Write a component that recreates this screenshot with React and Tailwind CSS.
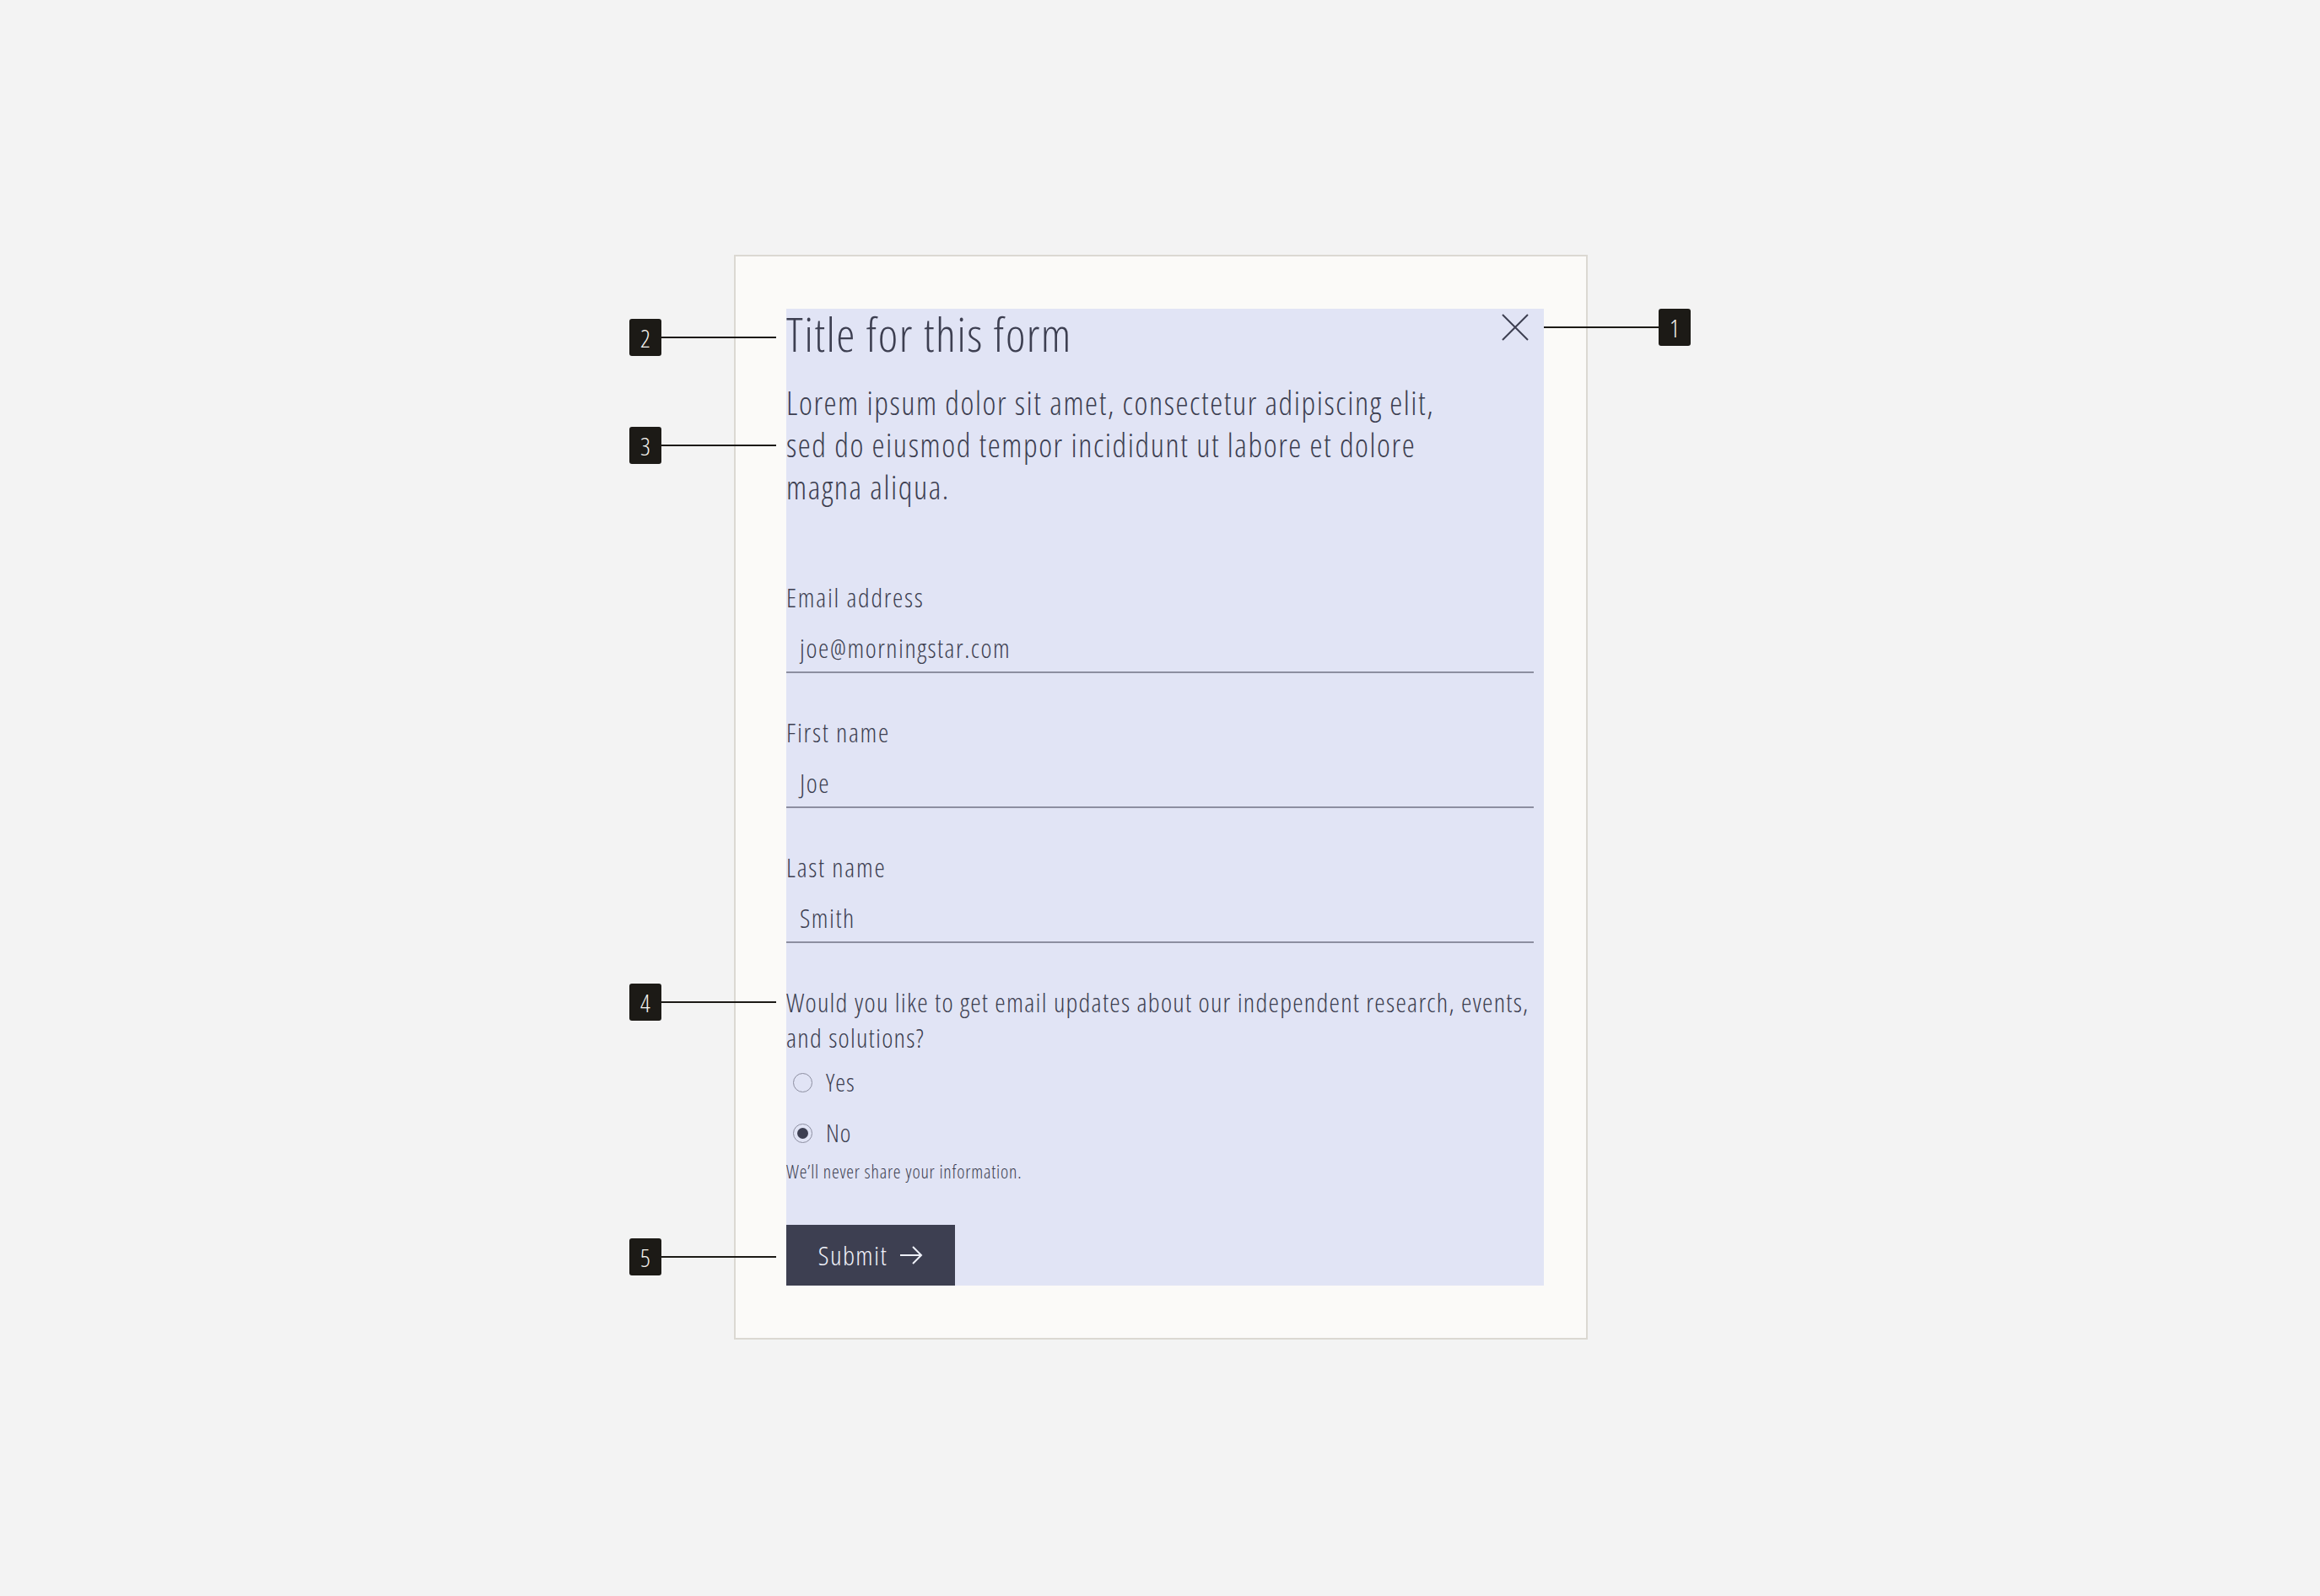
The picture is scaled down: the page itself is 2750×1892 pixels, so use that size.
import React from "react";

const FONT = "font-['Open_Sans',sans-serif] font-light font-stretch-[75%] tracking-[0.04em]";

function Marker({ n, className, reverse }) {
  const box = (
    <div className="flex h-[44px] w-[38px] items-center justify-center rounded-[3px] bg-[#1c1a16] text-[29px] leading-none tracking-normal text-[#f6f4ef]">
      {n}
    </div>
  );
  const line = <div className="h-[2px] w-[136px] bg-[#1c1a16]" />;
  return (
    <div className={"absolute flex items-center " + className}>
      {reverse ? (
        <>
          {line}
          {box}
        </>
      ) : (
        <>
          {box}
          {line}
        </>
      )}
    </div>
  );
}

function Field({ label, value, className }) {
  return (
    <div className={className}>
      <div className="text-[31px] leading-[40px] tracking-[0.056em]">{label}</div>
      <div className="mt-[20px] w-[886px] border-b-2 border-[#8c8ea0] pb-[8px] pl-[16px] text-[31px] leading-[40px] tracking-[0.049em]">
        {value}
      </div>
    </div>
  );
}

function Radio({ checked, label, className }) {
  return (
    <div className={"flex h-[40px] items-center " + className}>
      <div className="ml-[8px] flex h-[23px] w-[23px] items-center justify-center rounded-full border-[1.5px] border-[#8c8ea0]">
        {checked && <div className="h-[13px] w-[13px] rounded-full bg-[#3d3f51]" />}
      </div>
      <span className="ml-[16px] text-[30px] leading-[40px] tracking-[0.03em]">{label}</span>
    </div>
  );
}

export default function App() {
  return (
    <div className={"flex h-[1892px] w-full items-center justify-center bg-[#f3f3f3] pb-[2px] pl-[2px] " + FONT}>
      <div className="border-2 border-[#dbd8d2] bg-[#fbfaf8] pb-[62px] pl-[60px] pr-[50px] pt-[62px]">
        <div className="relative flex h-[1158px] w-[898px] flex-col bg-[#e1e4f5] text-[#3d3f51]">
          <button className="absolute right-[18px] top-[6px] h-[32px] w-[32px]" aria-label="Close">
            <svg width="32" height="32" viewBox="0 0 32 32" fill="none" stroke="#3d3f51" strokeWidth="2">
              <path d="M1 1 L31 31 M31 1 L1 31" />
            </svg>
          </button>

          <Marker n="1" reverse className="left-full top-0" />
          <Marker n="2" className="left-[-186px] top-[12px]" />
          <Marker n="3" className="left-[-186px] top-[140px]" />
          <Marker n="4" className="left-[-186px] top-[800px]" />
          <Marker n="5" className="left-[-186px] top-[1102px]" />

          <h2 className="text-[56px] leading-[58px] tracking-[0.026em]">Title for this form</h2>
          <p className="mt-[28px] text-[38px] leading-[50px] tracking-[0.041em]">
            Lorem ipsum dolor sit amet, consectetur adipiscing elit,
            <br />
            sed do eiusmod tempor incididunt ut labore et dolore
            <br />
            magna aliqua.
          </p>

          <Field className="mt-[86px]" label="Email address" value="joe@morningstar.com" />
          <Field className="mt-[50px]" label="First name" value="Joe" />
          <Field className="mt-[50px]" label="Last name" value="Smith" />

          <div className="mt-[49px] text-[31.5px] leading-[42px] tracking-[0.039em]">
            <div className="whitespace-nowrap">
              Would you like to get email updates about our independent research, events,
            </div>
            <div>and solutions?</div>
          </div>

          <Radio className="mt-[12px]" label="Yes" />
          <Radio className="mt-[20px]" checked label="No" />

          <div className="mt-[10px] text-[22px] leading-[30px] tracking-[0.036em]">We’ll never share your information.</div>

          <button className="mt-[49px] flex h-[72px] w-[200px] items-center justify-center gap-[14px] bg-[#3d3f51] text-[32px] tracking-[0.043em] text-[#eef0f8]">
            <span>Submit</span>
            <svg width="28" height="24" viewBox="0 0 28 24" fill="none" stroke="#eef0f8" strokeWidth="2">
              <path d="M1 12 H26 M16 2 L26 12 L16 22" />
            </svg>
          </button>
        </div>
      </div>
    </div>
  );
}
